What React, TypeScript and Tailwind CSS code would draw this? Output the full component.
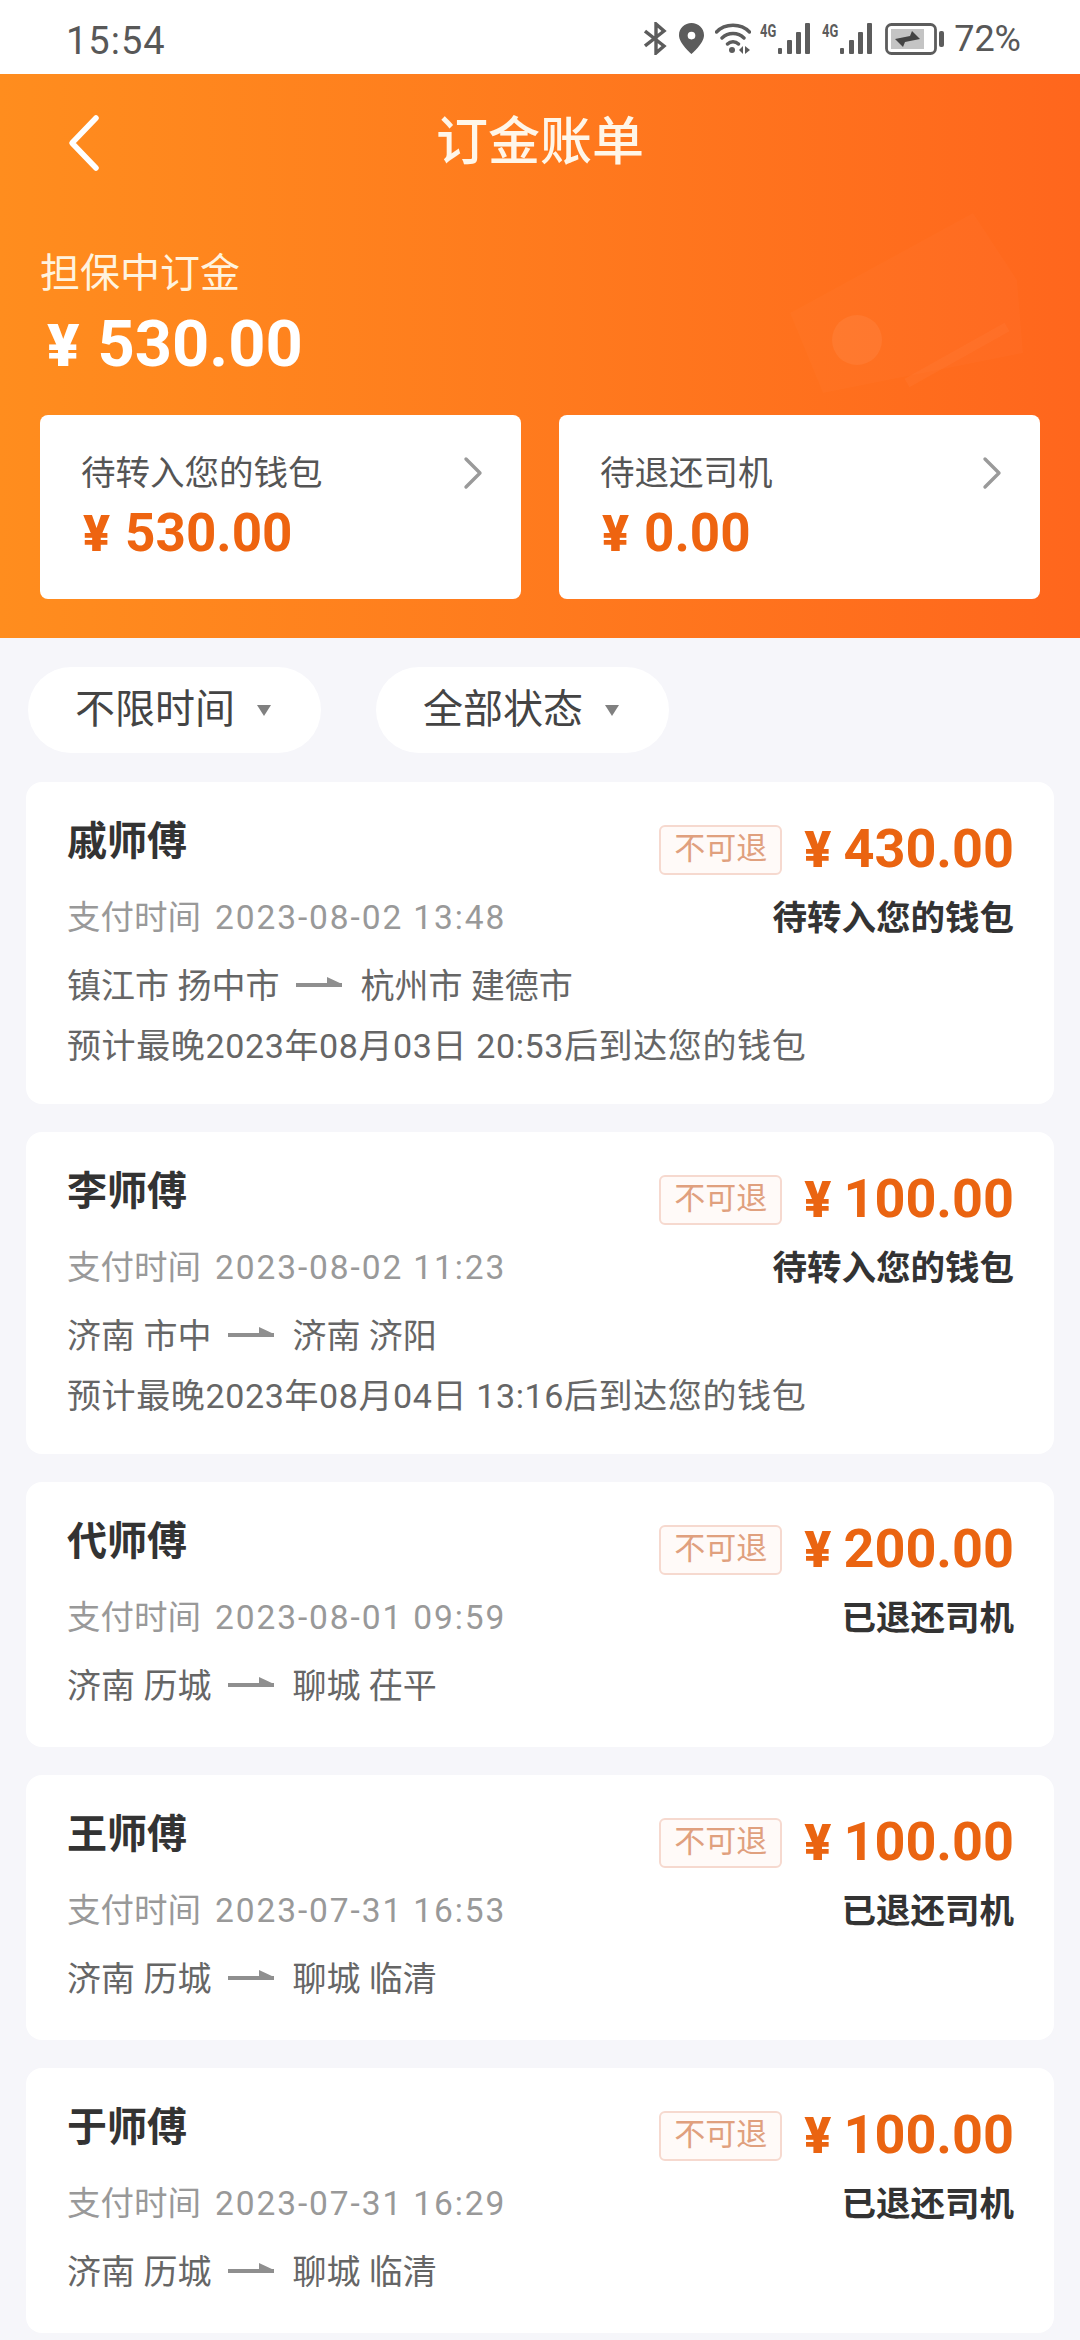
import React from "react";

const font = { fontFamily: '"Roboto","Noto Sans CJK SC",sans-serif' };

const orders = [
  { name: "戚师傅", amount: "430.00", time: "2023-08-02 13:48", status: "待转入您的钱包", from: "镇江市 扬中市", to: "杭州市 建德市", note: "预计最晚2023年08月03日 20:53后到达您的钱包" },
  { name: "李师傅", amount: "100.00", time: "2023-08-02 11:23", status: "待转入您的钱包", from: "济南 市中", to: "济南 济阳", note: "预计最晚2023年08月04日 13:16后到达您的钱包" },
  { name: "代师傅", amount: "200.00", time: "2023-08-01 09:59", status: "已退还司机", from: "济南 历城", to: "聊城 茌平" },
  { name: "王师傅", amount: "100.00", time: "2023-07-31 16:53", status: "已退还司机", from: "济南 历城", to: "聊城 临清" },
  { name: "于师傅", amount: "100.00", time: "2023-07-31 16:29", status: "已退还司机", from: "济南 历城", to: "聊城 临清" },
];

function Signal() {
  return (
    <div className="flex items-start w-[50px] h-[32px]">
      <span className="w-[18px] text-[18px] leading-[16px] font-bold text-[#5c5c5c] scale-x-[0.72] origin-left whitespace-nowrap">4G</span>
      <svg width="32" height="32" viewBox="0 0 32 32" fill="#5c5c5c">
        <rect x="0" y="25" width="4" height="6" rx="1" />
        <rect x="9" y="17" width="5" height="14" rx="1" />
        <rect x="18" y="9" width="5" height="22" rx="1" />
        <rect x="27" y="0" width="5" height="31" rx="1" />
      </svg>
    </div>
  );
}

function StatusBar() {
  return (
    <div className="h-[74px] bg-white flex items-center justify-between pl-[66px] pr-[59px] pt-[5px] text-[#585858]" style={font}>
      <span className="leading-none text-[38px] tracking-[1px] mt-[2px]">15:54</span>
      <div className="flex items-center text-[36px] mt-[-2px]">
        <svg width="24" height="33" viewBox="0 0 24 33" fill="none" stroke="#5c5c5c" strokeWidth="3.4" className="mr-[11px]">
          <path d="M1 9l19 15-8 7V2l8 7L1 24" />
        </svg>
        <svg width="25" height="31" viewBox="0 0 26 32" fill="#5c5c5c" className="mr-[11px]">
          <path fillRule="evenodd" d="M13 0C6 0 0 5.500 0 12.500 0 21 13 32 13 32s13-11 13-19.500C26 5.500 20 0 13 0zm0 9a4 4 0 110 8 4 4 0 010-8z" />
        </svg>
        <svg width="36" height="32" viewBox="0 0 36 32" fill="none" stroke="#5c5c5c" strokeWidth="3.4" strokeLinecap="round" className="mr-[9px]">
          <path d="M1.500 9C10 0 26 0 34.500 9M7 15c6-6 16-6 22 0M12.500 21c3-3 8-3 11 0" />
          <circle cx="17" cy="27" r="3" fill="#5c5c5c" stroke="none" />
          <path d="M28 23v8l-4-4zM30 23v8l5-4z" fill="#5c5c5c" stroke="none" />
        </svg>
        <Signal />
        <div className="w-[12px]" />
        <Signal />
        <svg width="59" height="32" viewBox="0 0 59 32" fill="none" className="ml-[13px] mr-[10px]">
          <rect x="1.500" y="1.500" width="49" height="29" rx="5" stroke="#5c5c5c" strokeWidth="2.800" />
          <rect x="6" y="6" width="33" height="20" fill="#c4c4c4" />
          <path d="M10 16l15-3 2-5 8 8-15 3-2 5z" fill="#444444" />
          <rect x="54" y="8" width="5" height="16" rx="2" fill="#5c5c5c" />
        </svg>
        <span className="leading-none">72%</span>
      </div>
    </div>
  );
}

function SummaryCard({ title, value }: { title: string; value: string }) {
  return (
    <div className="flex-1 h-[184px] bg-white rounded-[8px] pl-[41px] pr-[40px] pt-[36px]">
      <div className="flex items-center justify-between">
        <span className="text-[34.500px] leading-[44px] text-[#555555]">{title}</span>
        <svg width="22" height="36" viewBox="0 0 22 36" fill="none" stroke="#9a9a9a" strokeWidth="3.400" strokeLinecap="round" strokeLinejoin="round" className="mr-[-3px]">
          <path d="M4 4l14 14L4 32" />
        </svg>
      </div>
      <div className="mt-[8px] text-[#ee6410] text-[53px] leading-[60px] font-bold flex items-baseline">
        <span className="text-[50px] font-black ml-[2px] mr-[15px]">¥</span>{value}
      </div>
    </div>
  );
}

function Arrow() {
  return (
    <svg width="46" height="16" viewBox="0 0 46 16" className="ml-[17px] mr-[18px] mt-[-6px]" fill="#8f8f8f">
      <path d="M0 8h46v4H0z" />
      <path d="M31 2l15 7H31z" />
    </svg>
  );
}

function Order({ o }: { o: (typeof orders)[number] }) {
  return (
    <div className={o.note ? "bg-white rounded-[16px] pl-[41px] pr-[40px] pt-[32px] pb-[33px]" : "bg-white rounded-[16px] pl-[41px] pr-[40px] pt-[32px] pb-[36px]"}>
      <div className="flex items-start justify-between">
        <span className="text-[40px] leading-[54px] mt-[1px] font-bold text-[#333333]">{o.name}</span>
        <div className="flex items-center">
          <span className="w-[123px] h-[50px] border-2 border-[#f6d9cf] bg-[#fffaf8] rounded-[6px] flex items-center justify-center text-[31px] text-[#e0a07e]">不可退</span>
          <span className="ml-[22px] text-[54px] leading-[70px] font-bold text-[#ea6411] flex items-baseline">
            <span className="text-[50px] font-black mr-[12px]">¥</span>{o.amount}
          </span>
        </div>
      </div>
      <div className="flex items-center justify-between mt-[8px] h-[50px]">
        <span className="text-[33.500px] text-[#999999]">
          支付时间<span className="ml-[14px] tracking-[1.900px]">{o.time}</span>
        </span>
        <span className="text-[34.500px] mt-[2px] font-bold text-[#333333]">{o.status}</span>
      </div>
      <div className="flex items-center mt-[18px] h-[50px] text-[34px] text-[#666666]">
        <span>{o.from}</span>
        <Arrow />
        <span>{o.to}</span>
      </div>
      {o.note && <div className="mt-[10px] h-[50px] flex items-center text-[34px] text-[#666666] tracking-[0.62px]">{o.note}</div>}
    </div>
  );
}

function Pill({ label }: { label: string }) {
  return (
    <div className="w-[293px] h-[86px] bg-white rounded-[43px] flex items-center pl-[47px]">
      <span className="text-[40px] text-[#444444]">{label}</span>
      <span className="ml-[22px] w-0 h-0 border-x-[7px] border-x-transparent border-t-[11px] border-t-[#808080]" />
    </div>
  );
}

export default function App() {
  return (
    <div className="w-[1080px] h-[2340px] overflow-hidden bg-[#f6f6fa]" style={font}>
      <StatusBar />
      <div className="relative h-[564px] bg-gradient-to-r from-[#ff8d1e] to-[#ff661d] px-[40px] overflow-hidden">
        <svg className="absolute left-[780px] top-[130px]" width="260" height="200" viewBox="0 0 260 200">
          <path d="M10 109L193 9l44 67 6 73-200 40z" fill="#ffffff" fillOpacity="0.02" />
          <circle cx="77" cy="136" r="25" fill="#ffffff" fillOpacity="0.06" />
          <path d="M127 179L227 123" stroke="#ffffff" strokeOpacity="0.03" strokeWidth="10" />
        </svg>
        <div className="relative flex items-center justify-center h-[138px]">
          <svg width="36" height="58" viewBox="0 0 36 58" fill="none" stroke="#ffffff" strokeWidth="5.500" strokeLinecap="round" strokeLinejoin="round" className="absolute left-[26px] top-[40px]">
            <path d="M30 4L6 29l24 25" />
          </svg>
          <span className="text-[52px] font-medium text-[#fff6e8]">订金账单</span>
        </div>
        <div className="relative text-[40px] leading-[52px] text-[#fff3df] mt-[36px]">担保中订金</div>
        <div className="relative text-white text-[65px] leading-[76px] font-bold flex items-baseline mt-[6px]">
          <span className="text-[60px] font-black ml-[7px] mr-[18px]">¥</span>530.00
        </div>
        <div className="relative flex gap-[38px] mt-[31px]">
          <SummaryCard title="待转入您的钱包" value="530.00" />
          <SummaryCard title="待退还司机" value="0.00" />
        </div>
      </div>
      <div className="flex gap-[55px] pl-[28px] pt-[29px]">
        <Pill label="不限时间" />
        <Pill label="全部状态" />
      </div>
      <div className="flex flex-col gap-[28px] px-[26px] mt-[29px]">
        {orders.map((o) => (
          <Order key={o.name} o={o} />
        ))}
      </div>
    </div>
  );
}
